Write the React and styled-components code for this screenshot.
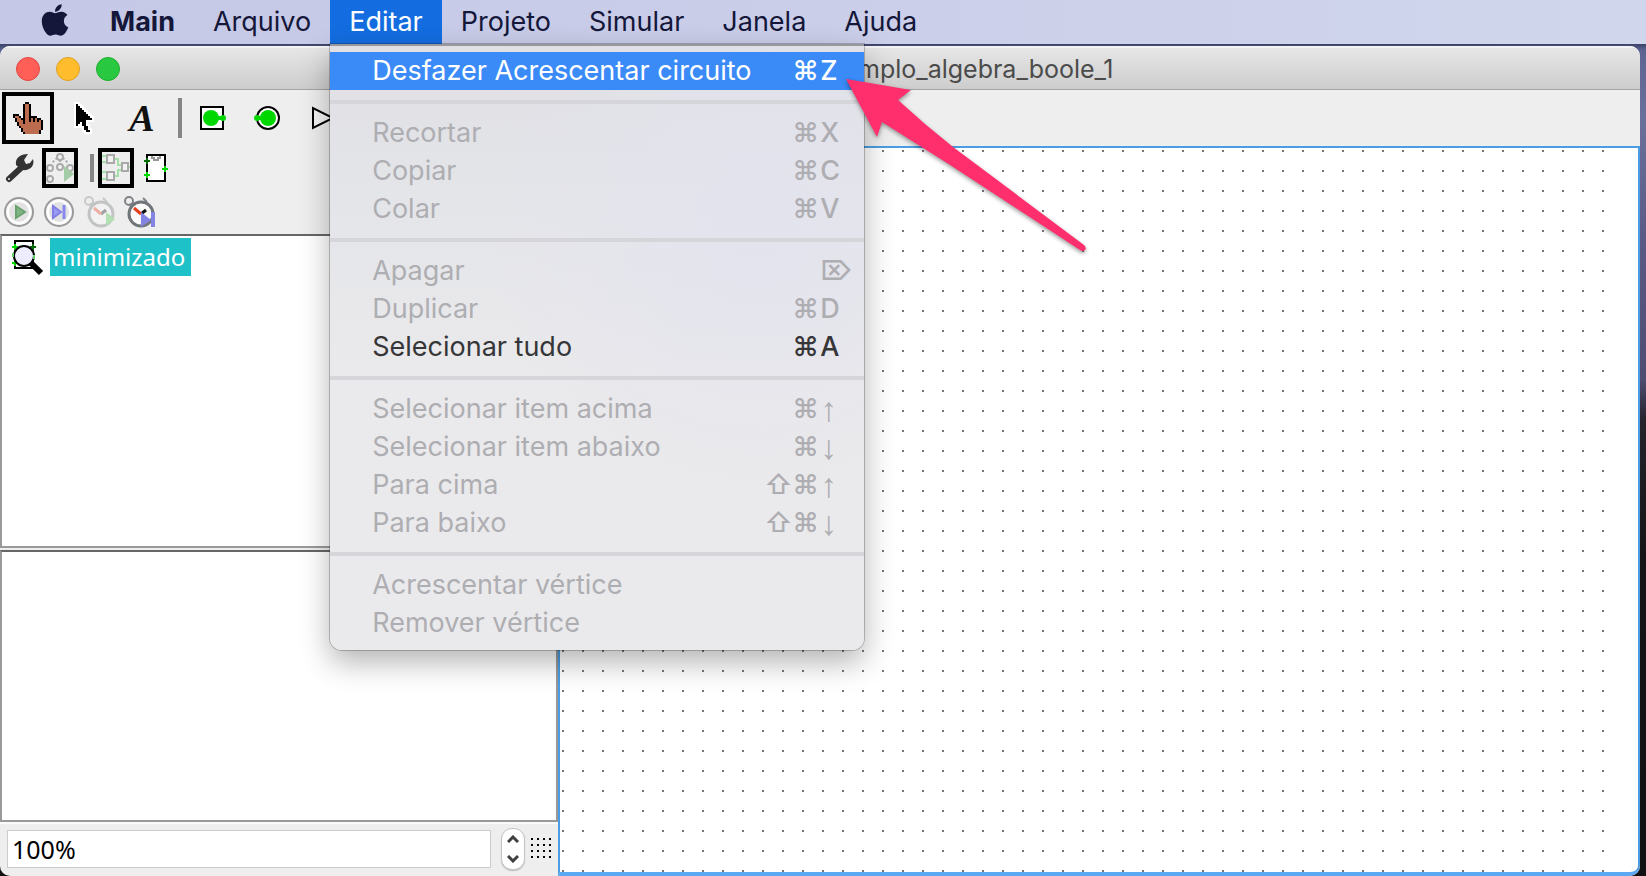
import React from "react";
import styled, { createGlobalStyle, css } from "styled-components";
import { FaApple } from "react-icons/fa";

const uiFont = `Inter, "Liberation Sans", sans-serif`;
const javaFont = `"Noto Sans", "DejaVu Sans", sans-serif`;

const GlobalStyle = createGlobalStyle`
  *, *::before, *::after { box-sizing: border-box; }
  html, body { margin: 0; height: 100%; overflow: hidden; }
  #root { height: 100%; }
  button, input { font: inherit; color: inherit; margin: 0; }
`;

const Desktop = styled.div`
  position: relative;
  display: flex;
  flex-direction: column;
  gap: 2px;
  height: 100vh;
  font-family: ${uiFont};
  background: linear-gradient(#3c4266 44px, #5c6492 50px, #6b709b 120px, #5a5a86 240px, #4e4c70 380px, #25232b 420px, #141414 560px, #111);
`;

/* ---------- system menu bar ---------- */

const MenuBar = styled.nav`
  position: relative;
  z-index: 2;
  display: flex;
  align-items: stretch;
  flex: none;
  height: 44px;
  padding-left: 24px;
  background: linear-gradient(90deg, #c5c8e6, #cbcee9 50%, #d0d7ec);
  color: #14173a;
  font-size: 27px;
  line-height: 44px;
`;

const MenuSlot = styled.div`
  position: relative;
`;

const MenuButton = styled.button`
  display: flex;
  align-items: center;
  height: 44px;
  padding: 0 19px;
  border: 0;
  background: ${(p) => (p.$open ? "#136de0" : "transparent")};
  color: ${(p) => (p.$open ? "#fff" : "inherit")};
  font-weight: ${(p) => (p.$strong ? 700 : 400)};
  line-height: 44px;
  white-space: nowrap;
`;

const AppleButton = styled(MenuButton)`
  padding: 0 18px 0 13px;
  align-items: flex-start;
`;

const AppleLogo = styled(FaApple)`
  width: 36px;
  height: 36px;
  margin-top: 2px;
`;

/* ---------- drop-down menu ---------- */

const Menu = styled.div`
  position: absolute;
  top: 44px;
  left: 0;
  width: 534px;
  padding: 6px 0 8px;
  border-top: 2px solid #98989c;
  border-radius: 0 0 12px 12px;
  background:
    radial-gradient(circle at 80% 30%, #e3e3ee, transparent 45%),
    linear-gradient(#dfdfe4, #e4e5e9 25%, #eaeaec 55%);
  box-shadow: 0 0 0 1px rgba(0, 0, 0, 0.22), 0 12px 30px rgba(0, 0, 0, 0.3);
`;

const MenuItem = styled.button`
  display: flex;
  justify-content: space-between;
  align-items: center;
  width: 100%;
  height: 38px;
  padding: 0 0 0 42px;
  border: 0;
  background: ${(p) => (p.$active ? "#3a8af7" : "transparent")};
  color: ${(p) => (p.$active ? "#fff" : "#363638")};
  line-height: 38px;
  text-align: left;
  white-space: nowrap;
  &:disabled { color: #aeaeb2; }
`;

const MenuRule = styled.hr`
  height: 4px;
  margin: 10px 0;
  border: 0;
  background: #d6d6da;
`;

const Shortcut = styled.span`
  display: grid;
  grid-auto-flow: column;
  grid-auto-columns: 28px;
  align-items: center;
  height: 38px;
  padding-right: 16px;
`;

const Key = styled.kbd`
  font-family: ${(p) => (p.$arrow ? `"Liberation Sans", sans-serif` : uiFont)};
  font-size: ${(p) => (p.$arrow ? 34 : 27)}px;
  font-weight: ${(p) => (p.$arrow ? 700 : 500)};
  line-height: ${(p) => (p.$arrow ? 34 : 38)}px;
`;

/* ---------- application window ---------- */

const Window = styled.main`
  display: flex;
  flex-direction: column;
  flex: 1;
  min-height: 0;
  margin-right: 6px;
  border-radius: 10px;
  overflow: hidden;
  background: #eee;
`;

const TitleBar = styled.header`
  display: grid;
  grid-template-columns: 1fr 1fr;
  align-items: center;
  flex: none;
  height: 44px;
  border-top: 2px solid #f4f4f4;
  border-bottom: 1px solid #a5a3a5;
  background: linear-gradient(#e6e6e6, #cdcdcd);
`;

const Lights = styled.div`
  display: flex;
  gap: 16px;
  padding-left: 16px;
`;

const Light = styled.button`
  width: 24px;
  height: 24px;
  padding: 0;
  border: 1px solid ${(p) => p.$edge};
  border-radius: 50%;
  background: ${(p) => p.$fill};
`;

const Title = styled.h1`
  margin: 0;
  padding-left: 38px;
  color: #4b4b4b;
  font-size: 25px;
  font-weight: 400;
  line-height: 40px;
  white-space: nowrap;
`;

const MainTools = styled.div`
  display: flex;
  align-items: center;
  flex: none;
  height: 56px;
  padding-left: 2px;
`;

const Workspace = styled.div`
  display: flex;
  flex: 1;
  min-height: 0;
`;

const Sidebar = styled.section`
  display: flex;
  flex-direction: column;
  flex: none;
  width: 34%;
`;

const ToolRow = styled.div`
  display: flex;
  align-items: center;
  flex: none;
  height: 44px;
`;

const ToolButton = styled.button`
  display: flex;
  align-items: center;
  justify-content: center;
  width: ${(p) => p.$w}px;
  height: ${(p) => p.$h}px;
  padding: 0;
  border: ${(p) => (p.$selected ? "4px solid #000" : "0")};
  background: transparent;
  & > svg { display: block; flex: none; }
`;

const ToolRule = styled.span`
  flex: none;
  width: 4px;
  height: ${(p) => p.$h}px;
  margin: 0 ${(p) => p.$after}px 0 ${(p) => p.$before}px;
  background: #858585;
`;

const LetterA = styled.span`
  font: italic bold 38px/40px "Liberation Serif", serif;
  color: #111;
`;

const paneFrame = css`
  min-height: 0;
  border: 2px solid #999;
  border-top-color: #666;
  background: #fff;
`;

const TreePane = styled.ul`
  ${paneFrame}
  flex: 8 1 0;
  margin: 0 0 2px;
  padding: 2px 10px;
  list-style: none;
`;

const AttributePane = styled.div`
  ${paneFrame}
  flex: 7 1 0;
`;

const TreeItem = styled.li`
  display: flex;
  align-items: center;
  gap: 6px;
  height: 38px;
`;

const TreeLabel = styled.span`
  padding: 0 6px 0 3px;
  background: #1fc1c8;
  color: #fff;
  font: 24px/38px ${javaFont};
`;

const ZoomBar = styled.div`
  display: flex;
  align-items: center;
  flex: none;
  height: 54px;
  padding: 0 7px 2px;
  border-top: 2px solid #fafafa;
`;

const ZoomInput = styled.input`
  flex: 1;
  min-width: 0;
  height: 38px;
  padding: 0 4px;
  border: 1px solid #ccc;
  border-radius: 0;
  outline: 0;
  background: #fff;
  color: #000;
  font: 25px/36px ${javaFont};
`;

const Stepper = styled.div`
  display: flex;
  flex-direction: column;
  width: 24px;
  height: 42px;
  margin: 0 6px 0 10px;
  border: 1px solid #c4c4c4;
  border-radius: 11px;
  background: #fff;
  box-shadow: 0 1px 1px rgba(0, 0, 0, 0.2);
`;

const StepButton = styled.button`
  display: flex;
  flex: 1;
  align-items: center;
  justify-content: center;
  padding: 0;
  border: 0;
  background: transparent;
`;

const Canvas = styled.section`
  flex: 1;
  min-width: 0;
  padding-right: 18px;
  border: 2px solid #4a9de2;
  border-bottom: 4px solid #5aa9f2;
  border-radius: 0 0 10px 0;
  background: #fff;
  & > svg { display: block; width: 100%; height: 100%; }
`;

const Pointer = styled.svg`
  position: absolute;
  z-index: 3;
  top: 70px;
  left: 836px;
  width: 260px;
  height: 190px;
  pointer-events: none;
  filter: drop-shadow(0 2px 2px rgba(0, 0, 0, 0.4));
`;

/* ---------- pixel icons: one character is one 2px cell ---------- */

const palette = { "#": "#000", c: "#bb6c4f" };

function PixelIcon({ rows, halo }) {
  const w = Math.max(...rows.map((r) => r.length));
  const pad = halo ? 2 : 0;
  const cells = rows.flatMap((row, y) =>
    [...row].map((ch, x) => (ch === "." ? null : { x: x * 2 + pad, y: y * 2 + pad, ch })).filter(Boolean)
  );
  return (
    <svg width={w * 2 + pad * 2} height={rows.length * 2 + pad * 2} shapeRendering="crispEdges" aria-hidden="true">
      {halo && cells.map((c, i) => <rect key={"h" + i} x={c.x - 2} y={c.y - 2} width="6" height="6" fill="#fff" />)}
      {cells.map((c, i) => <rect key={i} x={c.x} y={c.y} width="2" height="2" fill={palette[c.ch]} />)}
    </svg>
  );
}

const hand = [
  "......##.......",
  ".....#cc#......",
  ".....#cc#......",
  ".....#cc#......",
  ".....#cc#......",
  ".....#cc#......",
  "###..#cc#......",
  "#cc#.#cc####...",
  ".#cc##cc#c#c##.",
  ".#ccc#cc#c#c#c#",
  "..#cc#cccccccc#",
  "..#ccccccccccc#",
  "...#cccccccccc#",
  "....#ccccccccc#",
  "....#cccccccc#.",
  ".....#ccccccc#.",
];

const cursor = [
  "#.......",
  "##......",
  "###.....",
  "####....",
  "#####...",
  "######..",
  "#######.",
  "########",
  "#####...",
  "##.##...",
  "#..##...",
  "....##..",
  "....##..",
  ".....##.",
];

const InputPin = () => (
  <svg width="28" height="28" viewBox="0 0 28 28" aria-hidden="true">
    <rect x="3" y="3" width="22" height="22" fill="#fff" stroke="#000" strokeWidth="2" />
    <circle cx="13" cy="14" r="8" fill="#00d600" />
    <path d="M12 12H26V16H12Z" fill="#00d600" />
    <circle cx="25" cy="14" r="3" fill="#00d600" />
  </svg>
);

const OutputPin = () => (
  <svg width="28" height="28" viewBox="0 0 28 28" aria-hidden="true">
    <circle cx="15" cy="14" r="11" fill="#fff" stroke="#000" strokeWidth="2" />
    <circle cx="15" cy="14" r="8" fill="#00d600" />
    <path d="M3 12H14V16H3Z" fill="#00d600" />
    <circle cx="4" cy="14" r="3" fill="#00d600" />
  </svg>
);

const NotGate = () => (
  <svg width="32" height="28" viewBox="0 0 32 28" aria-hidden="true">
    <path d="M4 4V24L24 14Z" fill="#f4f4f4" stroke="#000" strokeWidth="2" />
    <circle cx="27" cy="14" r="3" fill="#fff" stroke="#000" strokeWidth="2" />
  </svg>
);

const Wrench = () => (
  <svg width="32" height="30" viewBox="0 0 32 30" aria-hidden="true">
    <path d="M4 26L17 14" stroke="#333" strokeWidth="6" strokeLinecap="round" />
    <path d="M11 12C10 5 15 1 23 1L19 7L21 11L25 10L28 6C30 13 25 18 17 17Z" fill="#333" />
    <circle cx="4" cy="26" r="1" fill="#eee" />
  </svg>
);

const TreeIcon = () => (
  <svg width="28" height="32" viewBox="0 0 28 32" aria-hidden="true">
    <g fill="none" stroke="#aaa" strokeWidth="2">
      <path d="M11 6L6 11M17 6L22 11M14 8V10M4 18V20" strokeDasharray="2 2" />
      <circle cx="14" cy="5" r="3" fill="#f3f3f3" />
      <circle cx="4" cy="16" r="3" fill="#f3f3f3" />
      <circle cx="14" cy="15" r="3" fill="#f3f3f3" />
      <circle cx="24" cy="16" r="3" fill="#f3f3f3" />
      <circle cx="4" cy="27" r="3" fill="#f3f3f3" />
    </g>
    <path d="M18 14V30L28 22Z" fill="#a3cba5" />
  </svg>
);

const CircuitIcon = () => (
  <svg width="28" height="32" viewBox="0 0 28 32" shapeRendering="crispEdges" aria-hidden="true">
    <path d="M0 4H5M0 10H5M0 20H5M0 27H5M12 7H16V13H20M12 24H16V18H20M26 15H28" fill="none" stroke="#a6e0a6" strokeWidth="2" />
    <g fill="#f3f3f3" stroke="#aaa" strokeWidth="2">
      <rect x="5" y="3" width="7" height="8" />
      <rect x="5" y="20" width="7" height="8" />
      <rect x="20" y="11" width="6" height="8" />
    </g>
  </svg>
);

const ChipIcon = () => (
  <svg width="26" height="30" viewBox="0 0 26 30" shapeRendering="crispEdges" aria-hidden="true">
    <rect x="3" y="2" width="18" height="26" fill="#fff" stroke="#000" strokeWidth="2" />
    <path d="M8 3V5H10V7H14V5H16V3" fill="none" stroke="#999" strokeWidth="2" />
    <path d="M0 8H6M3 5V11" stroke="#006b00" strokeWidth="2" />
    <path d="M0 22H6M3 19V25M18 16H24M21 13V19" stroke="#00d600" strokeWidth="2" />
  </svg>
);

const RoundIcon = ({ children }) => (
  <svg width="32" height="32" viewBox="0 0 32 32" aria-hidden="true">
    <circle cx="16" cy="16" r="14" fill="#f4f4f4" stroke="#999" strokeWidth="2" />
    <circle cx="16" cy="16" r="11" fill="#e2e2e2" stroke="#fff" strokeWidth="2" />
    {children}
  </svg>
);

const PlayIcon = () => (
  <RoundIcon>
    <path d="M13 10V22L22 16Z" fill="#7db583" stroke="#6aa371" strokeWidth="2" />
  </RoundIcon>
);

const StepIcon = () => (
  <RoundIcon>
    <path d="M10 10V22L18 16Z" fill="#9a9af0" stroke="#8080e6" strokeWidth="2" />
    <path d="M21 9V23" stroke="#8787ee" strokeWidth="3" />
  </RoundIcon>
);

const ClockIcon = ({ faded, step }) => (
  <svg width="34" height="34" viewBox="0 0 34 34" aria-hidden="true">
    <g opacity={faded ? 0.35 : 1}>
      <circle cx="6" cy="6" r="4" fill="#eee" stroke="#808488" strokeWidth="2" />
      <path d="M6 10L11 8M20 3L24 7" stroke="#808488" strokeWidth="2" />
      <circle cx="18" cy="19" r="12" fill="#fafafa" stroke="#70757a" strokeWidth="3" />
      <path d="M18 19L23 15" stroke="#111" strokeWidth="3" />
      <path d="M11 13L18 19" stroke="#e8401c" strokeWidth="3" />
    </g>
    {step ? (
      <g fill="#8383e4">
        <path d="M18 17V32L28 25Z" />
        <path d="M28 17H32V32H28Z" />
      </g>
    ) : (
      <path d="M23 17V31L32 24Z" fill="#b2e0b2" />
    )}
  </svg>
);

const MagnifiedChip = () => (
  <svg width="32" height="38" viewBox="0 0 32 38" aria-hidden="true">
    <rect x="3" y="3" width="18" height="27" fill="#fff" stroke="#000" strokeWidth="2" />
    <path d="M0 9H6M3 6V12M0 25H6M3 22V28" stroke="#00d600" strokeWidth="2" />
    <path d="M18 9H24M21 6V12" stroke="#006b00" strokeWidth="2" />
    <circle cx="12" cy="18" r="10" fill="#ededff" stroke="#000" strokeWidth="2" />
    <path d="M1 15V19M22 17V21" stroke="#5fcf6a" strokeWidth="2" />
    <path d="M19 25L29 35" stroke="#000" strokeWidth="6" />
  </svg>
);

const Chevron = ({ down }) => (
  <svg width="12" height="8" viewBox="0 0 12 8" aria-hidden="true">
    <path d={down ? "M1 1L6 6L11 1" : "M1 7L6 2L11 7"} fill="none" stroke="#404040" strokeWidth="3" />
  </svg>
);

const GridIcon = () => (
  <svg width="20" height="24" viewBox="0 0 20 24" shapeRendering="crispEdges" aria-hidden="true">
    {[0, 1, 2, 3].flatMap((y) => [0, 1, 2, 3].map((x) => (
      <rect key={`${x}${y}`} x={x * 6} y={1 + y * 6} width="2" height="2" />
    )))}
  </svg>
);

/* ---------- content ---------- */

const editMenu = [
  [{ label: "Desfazer Acrescentar circuito", keys: ["⌘", "Z"], active: true }],
  [
    { label: "Recortar", keys: ["⌘", "X"], off: true },
    { label: "Copiar", keys: ["⌘", "C"], off: true },
    { label: "Colar", keys: ["⌘", "V"], off: true },
  ],
  [
    { label: "Apagar", keys: ["⌦"], off: true },
    { label: "Duplicar", keys: ["⌘", "D"], off: true },
    { label: "Selecionar tudo", keys: ["⌘", "A"] },
  ],
  [
    { label: "Selecionar item acima", keys: ["⌘", "↑"], off: true },
    { label: "Selecionar item abaixo", keys: ["⌘", "↓"], off: true },
    { label: "Para cima", keys: ["⇧", "⌘", "↑"], off: true },
    { label: "Para baixo", keys: ["⇧", "⌘", "↓"], off: true },
  ],
  [
    { label: "Acrescentar vértice", keys: [], off: true },
    { label: "Remover vértice", keys: [], off: true },
  ],
];

function EditMenu() {
  return (
    <Menu role="menu" aria-label="Editar">
      {editMenu.map((group, g) => (
        <React.Fragment key={g}>
          {g > 0 && <MenuRule />}
          {group.map((item) => (
            <MenuItem key={item.label} role="menuitem" disabled={item.off} $active={item.active}>
              {item.label}
              <Shortcut>
                {item.keys.map((k) => <Key key={k} $arrow={k === "↑" || k === "↓"}>{k}</Key>)}
              </Shortcut>
            </MenuItem>
          ))}
        </React.Fragment>
      ))}
    </Menu>
  );
}

export default function App() {
  return (
    <Desktop>
      <GlobalStyle />
      <MenuBar>
        <AppleButton aria-label="Apple"><AppleLogo /></AppleButton>
        <MenuButton $strong>Main</MenuButton>
        <MenuButton>Arquivo</MenuButton>
        <MenuSlot>
          <MenuButton $open aria-haspopup="menu" aria-expanded="true">Editar</MenuButton>
          <EditMenu />
        </MenuSlot>
        <MenuButton>Projeto</MenuButton>
        <MenuButton>Simular</MenuButton>
        <MenuButton>Janela</MenuButton>
        <MenuButton>Ajuda</MenuButton>
      </MenuBar>

      <Window>
        <TitleBar>
          <Lights>
            <Light aria-label="Fechar" $fill="#ff5f57" $edge="#e2463f" />
            <Light aria-label="Minimizar" $fill="#ffbd2e" $edge="#dfa023" />
            <Light aria-label="Ampliar" $fill="#28c940" $edge="#1dad2b" />
          </Lights>
          <Title>mplo_algebra_boole_1</Title>
        </TitleBar>

        <MainTools>
          <ToolButton $w={52} $h={52} $selected aria-label="Tocar"><PixelIcon rows={hand} /></ToolButton>
          <ToolButton $w={60} $h={52} aria-label="Editar seleção"><PixelIcon rows={cursor} halo /></ToolButton>
          <ToolButton $w={56} $h={52} aria-label="Texto"><LetterA>A</LetterA></ToolButton>
          <ToolRule $h={40} $before={8} $after={8} />
          <ToolButton $w={44} $h={52} aria-label="Pino de entrada"><InputPin /></ToolButton>
          <ToolButton $w={66} $h={52} aria-label="Pino de saída"><OutputPin /></ToolButton>
          <ToolButton $w={50} $h={52} aria-label="Porta NOT"><NotGate /></ToolButton>
        </MainTools>

        <Workspace>
          <Sidebar>
            <ToolRow>
              <ToolButton $w={42} $h={40} aria-label="Ferramentas"><Wrench /></ToolButton>
              <ToolButton $w={36} $h={40} $selected aria-label="Árvore de simulação"><TreeIcon /></ToolButton>
              <ToolRule $h={28} $before={12} $after={4} />
              <ToolButton $w={36} $h={40} $selected aria-label="Editar circuito"><CircuitIcon /></ToolButton>
              <ToolButton $w={46} $h={40} aria-label="Editar aparência"><ChipIcon /></ToolButton>
            </ToolRow>
            <ToolRow>
              <ToolButton $w={38} $h={40} aria-label="Simular"><PlayIcon /></ToolButton>
              <ToolButton $w={42} $h={40} aria-label="Passo"><StepIcon /></ToolButton>
              <ToolButton $w={40} $h={40} aria-label="Habilitar relógio"><ClockIcon faded /></ToolButton>
              <ToolButton $w={40} $h={40} aria-label="Pulso de relógio"><ClockIcon step /></ToolButton>
            </ToolRow>
            <TreePane>
              <TreeItem><MagnifiedChip /><TreeLabel>minimizado</TreeLabel></TreeItem>
            </TreePane>
            <AttributePane />
            <ZoomBar>
              <ZoomInput defaultValue="100%" aria-label="Zoom" />
              <Stepper>
                <StepButton aria-label="Aumentar"><Chevron /></StepButton>
                <StepButton aria-label="Diminuir"><Chevron down /></StepButton>
              </Stepper>
              <GridIcon />
            </ZoomBar>
          </Sidebar>
          <Canvas>
            <svg aria-hidden="true">
              <defs>
                <pattern id="dots" width="20" height="20" patternUnits="userSpaceOnUse">
                  <rect x="2" y="2" width="2" height="2" fill="#777" />
                </pattern>
              </defs>
              <rect width="100%" height="100%" fill="url(#dots)" />
            </svg>
          </Canvas>
        </Workspace>
      </Window>

      <Pointer viewBox="0 0 260 190" aria-hidden="true">
        <path
          d="M10 9L75 20L62 30Q88 54 117 77L248 175Q251 178 249 180Q247 182 244 180L111 93L46 52L41 67Z"
          fill="#ff2f6d"
        />
      </Pointer>
    </Desktop>
  );
}
